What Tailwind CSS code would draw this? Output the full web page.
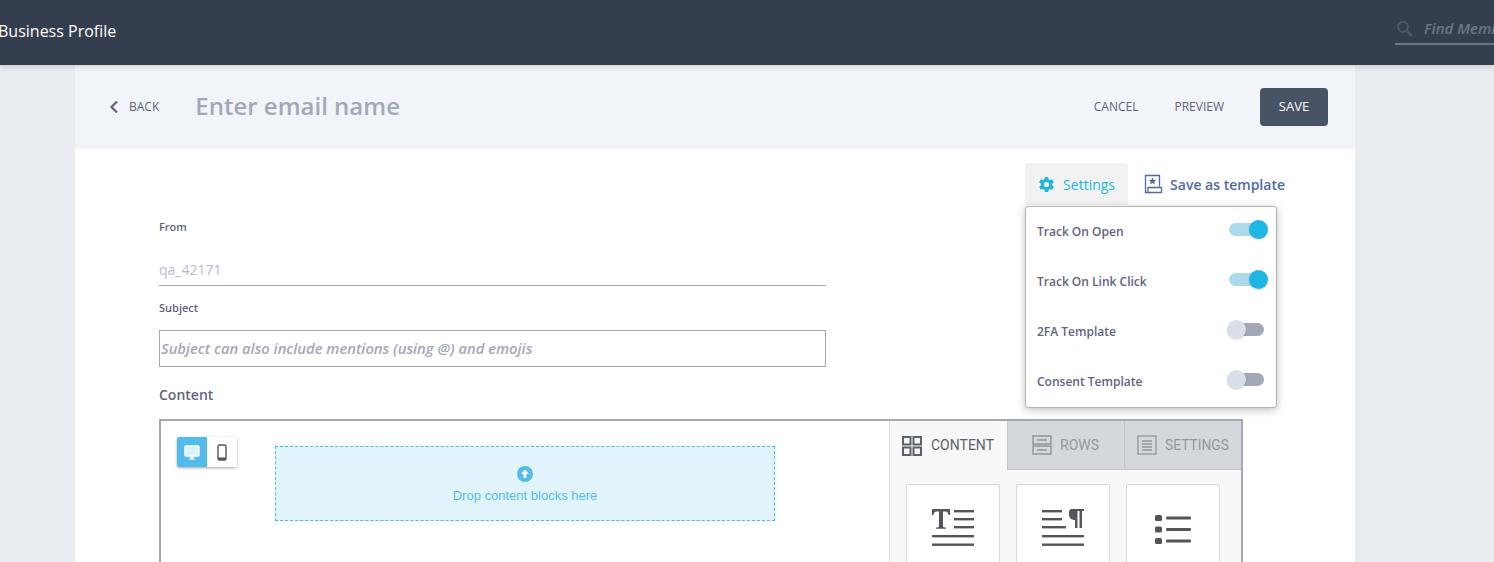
<!DOCTYPE html>
<html>
<head>
<meta charset="utf-8">
<script src="https://cdn.jsdelivr.net/npm/@tailwindcss/browser@4"></script>
</head>
<body class="h-[562px] overflow-hidden bg-[#e9edf2] font-['Open_Sans',sans-serif]">
<header class="relative z-10 flex h-[65px] items-center justify-between bg-[#353e4f] shadow-[0_2px_6px_rgba(0,0,0,0.15)]">
  <span class="-ml-[2px] mb-[4px] text-[16px] leading-[22px] text-white">Business Profile</span>
  <div class="flex h-[30px] w-[99px] items-center gap-[11px] self-end mb-[20px] overflow-hidden border-b-2 border-[#6f7587] pl-[1px] pb-[1px]">
    <svg class="h-[17px] w-[17px] shrink-0" viewBox="0 0 17 17" fill="none" stroke="#4f5868" stroke-width="2"><circle cx="7" cy="7" r="5"/><path d="M11 11l5 5" stroke-width="2.5"/></svg>
    <span class="whitespace-nowrap text-[15px] font-semibold italic text-[#6f7587]">Find Members</span>
  </div>
</header>
<main class="relative ml-[75px] h-[497px] w-[1280px] bg-white">
  <div class="flex h-[84px] items-center bg-[#f1f5f9] pl-[34px] pr-[27px]">
    <svg class="h-[14px] w-[10px]" viewBox="0 0 10 14" fill="none" stroke="#5f6480" stroke-width="2.2"><path d="M8 1.500L2.500 7L8 12.500"/></svg>
    <span class="ml-[10px] text-[12px] text-[#5f6480]">BACK</span>
    <span class="ml-[36px] mb-[2px] text-[24px] leading-[32px] font-semibold text-[#a4a7b8]">Enter email name</span>
    <span class="ml-auto text-[12px] text-[#5f6480]">CANCEL</span>
    <span class="ml-[36px] text-[12px] text-[#5f6480]">PREVIEW</span>
    <button class="ml-[36px] h-[38px] w-[68px] rounded-[4px] bg-[#495366] text-[13px] font-medium text-white">SAVE</button>
  </div>
  <div class="flex h-[56px] items-start justify-end pt-[14px] pr-[70px]">
    <div class="flex h-[42px] w-[103px] items-center gap-[9px] rounded-t-[3px] bg-[#f2f2f2] pl-[14px]">
      <svg class="h-[15px] w-[15px]" viewBox="3.500 3.300 17 17.400" fill="#1fb6e4"><path fill-rule="evenodd" d="M18.400 13a7.600 7.600 0 000-2l2.100-1.600-2-3.500-2.500 1a7.500 7.500 0 00-1.700-1L14 3.300h-4l-.4 2.600a7.500 7.500 0 00-1.700 1l-2.500-1-2 3.500L5.600 11a7.600 7.600 0 000 2l-2.100 1.600 2 3.500 2.500-1a7.500 7.500 0 001.700 1l.3 2.600h4l.4-2.600a7.500 7.500 0 001.700-1l2.500 1 2-3.500zM12 15a3 3 0 110-6 3 3 0 010 6z"/></svg>
      <span class="text-[14px] text-[#1fb6e4]">Settings</span>
    </div>
    <div class="ml-[16px] flex h-[42px] items-center gap-[7px]">
      <svg class="h-[20px] w-[19px]" viewBox="0 0 19 20" fill="none" stroke="#4f69a8" stroke-width="1.300"><path d="M15.500 12.500V1.500H1.500V18.500H4"/><path d="M4 18.500V13.500H17.500V18.500H4"/><path d="M8.500 3.500l1.100 2.300 2.500.3-1.800 1.700.5 2.500-2.300-1.300-2.300 1.300.5-2.500L4.900 6.100l2.500-.3z" fill="#4f69a8" stroke="none"/></svg>
      <span class="text-[14px] font-semibold text-[#4f69a8]">Save as template</span>
    </div>
  </div>
  <div class="w-[751px] pl-[84px]">
    <label class="block pt-[14px] text-[11px] leading-[15px] font-semibold text-[#5f6480]">From</label>
    <div class="mt-[21px] h-[31px] border-b border-[#a4a7b8] pt-[4px] text-[14px] leading-[22px] text-[#b6bccd]">qa_42171</div>
    <label class="block pt-[14px] text-[11px] leading-[15px] font-semibold text-[#5f6480]">Subject</label>
    <div class="mt-[15px] flex h-[37px] items-center border border-[#a4a7b8] pl-[1px] text-[14.750px] font-semibold italic text-[#a4a7b8]">Subject can also include mentions (using @) and emojis</div>
    <div class="mt-[18px] text-[14px] leading-[19px] font-semibold text-[#5f6480]">Content</div>
  </div>
  <div class="relative mt-[15px] ml-[84px] flex h-[200px] w-[1084px] border-2 border-[#a4a7b8]">
    <div class="relative w-[728px]">
      <div class="absolute top-[16px] left-[16px] flex h-[30px] w-[60px] overflow-hidden rounded-[2px] bg-white shadow-[0_1px_3px_rgba(0,0,0,0.35)]">
        <div class="flex w-[30px] items-center justify-center bg-[#52bbe9]">
          <svg class="h-[16px] w-[16px]" viewBox="0 0 16 16" fill="none"><rect x="1" y="2" width="14" height="10" rx="1" fill="#d8f1fc" stroke="#fff" stroke-width="1.400"/><path d="M5 15h6M7 12h2v3H7z" fill="#fff" stroke="#fff"/></svg>
        </div>
        <div class="flex w-[30px] items-center justify-center">
          <svg class="h-[17px] w-[10px]" viewBox="0 0 10 17" fill="none"><rect x="1" y="1" width="8" height="15" rx="1.500" stroke="#555" stroke-width="1.400"/><path d="M1 13.500h8V15a1 1 0 01-1 1H2a1 1 0 01-1-1z" fill="#555"/></svg>
        </div>
      </div>
      <div class="absolute top-[25px] left-[114px] flex h-[75px] w-[500px] flex-col items-center border border-dashed border-[#3fbdee] bg-[#e2f4fb] pt-[19px] font-['Liberation_Sans',sans-serif]">
        <svg class="h-[16px] w-[16px]" viewBox="0 0 16 16"><circle cx="8" cy="8" r="8" fill="#52bbe9"/><path d="M8 3.500L12 8H9.500v4h-3V8H4z" fill="#fff"/></svg>
        <span class="mt-[6px] text-[13px] leading-[15px] text-[#52bbe9]">Drop content blocks here</span>
      </div>
    </div>
    <div class="flex-1 border-l border-[#dcdcdc] bg-[#f8f8f8] font-['Roboto',sans-serif]">
      <div class="flex h-[49px]">
        <div class="flex w-[117px] items-center gap-[9px] bg-[#f8f8f8] pl-[12px] text-[14px] text-[#5a6268]">
          <svg class="h-[20px] w-[20px]" viewBox="0 0 20 20" fill="none" stroke="#5a6268" stroke-width="2"><rect x="1" y="1" width="7.500" height="7.500"/><rect x="11.500" y="1" width="7.500" height="7.500"/><rect x="1" y="11.500" width="7.500" height="7.500"/><rect x="11.500" y="11.500" width="7.500" height="7.500"/></svg>
          CONTENT
        </div>
        <div class="flex w-[117px] items-center gap-[8px] border-b border-l border-[#c4c7ca] bg-[#d5d8db] pl-[24px] text-[14px] text-[#92979c]">
          <svg class="h-[20px] w-[20px]" viewBox="0 0 20 20" fill="none" stroke="#92979c" stroke-width="1.500"><rect x="1" y="1" width="18" height="8"/><rect x="1" y="11" width="18" height="8"/><path d="M5 5h10M5 15h10"/></svg>
          ROWS
        </div>
        <div class="flex flex-1 items-center gap-[8px] border-b border-l border-[#c4c7ca] bg-[#d5d8db] pl-[12px] text-[13.800px] text-[#92979c]">
          <svg class="h-[20px] w-[20px]" viewBox="0 0 20 20" fill="none" stroke="#92979c" stroke-width="1.300"><rect x="1" y="1" width="18" height="18"/><path d="M5 6h10M5 9h10M5 12h10M5 15h10"/></svg>
          SETTINGS
        </div>
      </div>
      <div class="flex gap-[16px] pt-[14px] pl-[16px]">
        <div class="flex h-[100px] w-[94px] justify-center rounded-t-[2px] border border-[#d8d8d8] bg-white pt-[24px]">
          <svg class="h-[38px] w-[42px]" viewBox="0 0 42 38" fill="#52565b"><path d="M0 0h18v6h-1.500c-.3-2-1-3.500-3-3.500H11v14.500c0 1 .8 1.500 3 1.500v1.300H4v-1.300c2.200 0 3-.5 3-1.500V2.500H4.500c-2 0-2.700 1.500-3 3.500H0z"/><rect x="22" y="1" width="20" height="2.400"/><rect x="22" y="9" width="20" height="2.400"/><rect x="22" y="17" width="20" height="2.400"/><rect y="26" width="42" height="2.400"/><rect y="34.500" width="42" height="2.400"/></svg>
        </div>
        <div class="flex h-[100px] w-[94px] justify-center rounded-t-[2px] border border-[#d8d8d8] bg-white pt-[24px]">
          <svg class="h-[38px] w-[42px]" viewBox="0 0 42 38" fill="#52565b"><rect y="1" width="20" height="2.400"/><rect y="9" width="20" height="2.400"/><rect y="17" width="24" height="2.400"/><path d="M30 0h12v2h-2v17h-2.500V2h-2v17H33V11c-3.500 0-6-2.200-6-5.500S27 0 30 0z"/><rect y="26" width="42" height="2.400"/><rect y="34.500" width="42" height="2.400"/></svg>
        </div>
        <div class="flex h-[100px] w-[94px] justify-center rounded-t-[2px] border border-[#d8d8d8] bg-white pt-[30px]">
          <svg class="h-[30px] w-[36px]" viewBox="0 0 36 30" fill="#52565b"><rect x="0" y="0" width="7" height="6" rx="1.500"/><rect x="0" y="11.500" width="7" height="6" rx="1.500"/><rect x="0" y="23" width="7" height="6" rx="1.500"/><rect x="11" y="1.500" width="25" height="3" rx="1"/><rect x="11" y="13" width="25" height="3" rx="1"/><rect x="11" y="24.500" width="25" height="3" rx="1"/></svg>
        </div>
      </div>
    </div>
  </div>
  <div class="absolute top-[141px] left-[950px] z-20 h-[202px] w-[252px] rounded-[3px] border border-[#b5b5b0] bg-white px-[11px] shadow-[0_2px_8px_rgba(0,0,0,0.25)]">
    <div class="flex h-[50px] items-center justify-between">
      <span class="text-[12px] font-semibold text-[#5f6480]">Track On Open</span>
      <span class="relative mb-[5px] block h-[13px] w-[36px] rounded-full bg-[#acdaec]"><span class="absolute top-[-3px] right-[-3px] h-[19px] w-[19px] rounded-full bg-[#1fb6e4] shadow-[0_1px_2px_rgba(0,0,0,0.15)]"></span></span>
    </div>
    <div class="flex h-[50px] items-center justify-between">
      <span class="text-[12px] font-semibold text-[#5f6480]">Track On Link Click</span>
      <span class="relative mb-[5px] block h-[13px] w-[36px] rounded-full bg-[#acdaec]"><span class="absolute top-[-3px] right-[-3px] h-[19px] w-[19px] rounded-full bg-[#1fb6e4] shadow-[0_1px_2px_rgba(0,0,0,0.15)]"></span></span>
    </div>
    <div class="flex h-[50px] items-center justify-between">
      <span class="text-[12px] font-semibold text-[#5f6480]">2FA Template</span>
      <span class="relative mr-[1px] mb-[5px] block h-[13px] w-[35px] rounded-full bg-[#a4a7b8]"><span class="absolute top-[-3px] left-[-2px] h-[19px] w-[19px] rounded-full bg-[#d9dfe8] shadow-[0_1px_2px_rgba(0,0,0,0.15)]"></span></span>
    </div>
    <div class="flex h-[50px] items-center justify-between">
      <span class="text-[12px] font-semibold text-[#5f6480]">Consent Template</span>
      <span class="relative mr-[1px] mb-[5px] block h-[13px] w-[35px] rounded-full bg-[#a4a7b8]"><span class="absolute top-[-3px] left-[-2px] h-[19px] w-[19px] rounded-full bg-[#d9dfe8] shadow-[0_1px_2px_rgba(0,0,0,0.15)]"></span></span>
    </div>
  </div>
</main>
</body>
</html>
